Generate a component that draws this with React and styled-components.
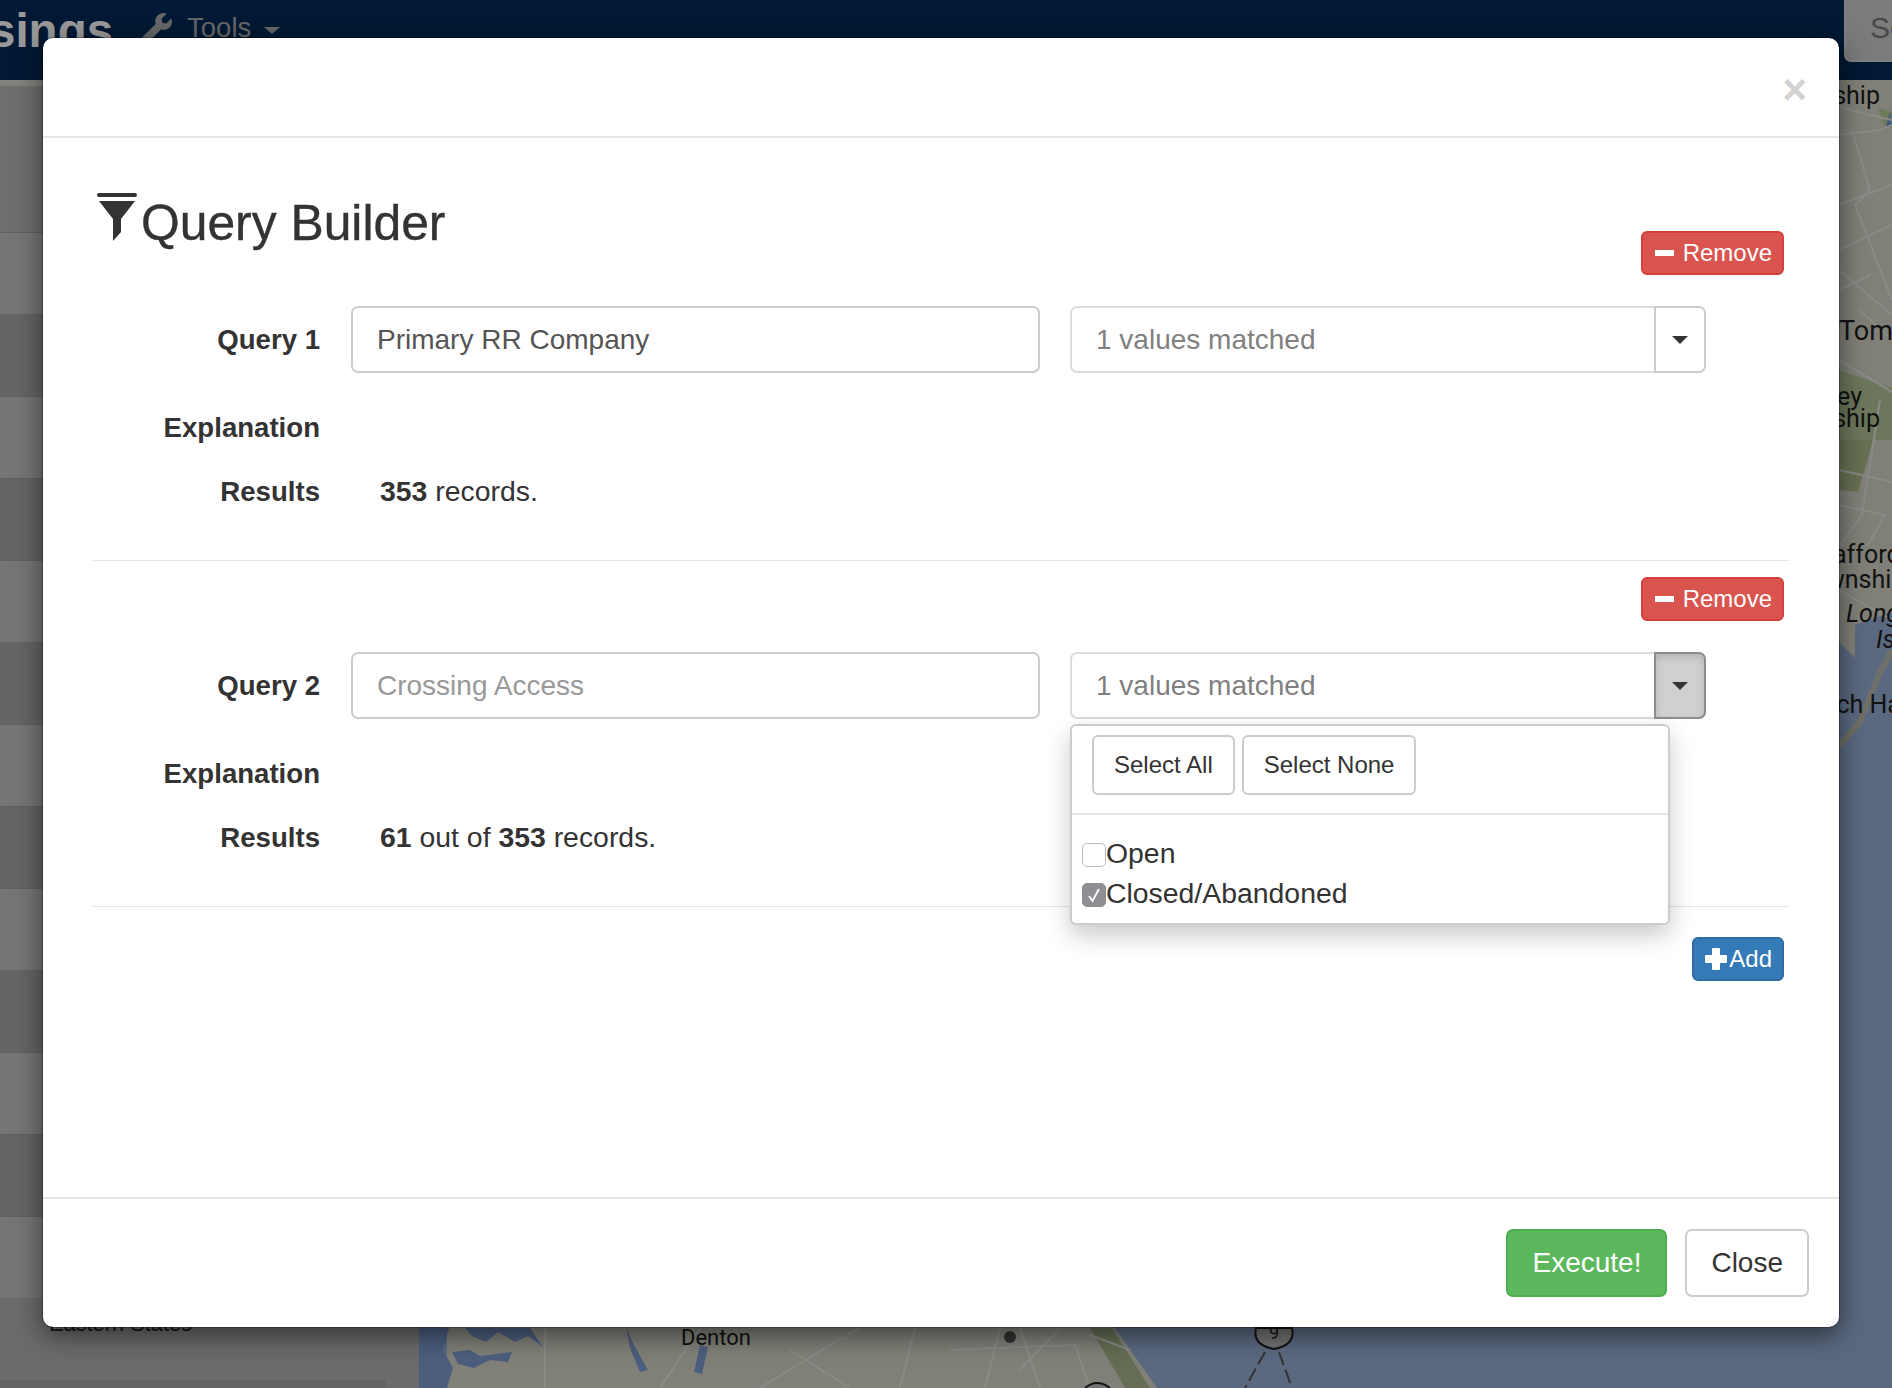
import React from "react";
import styled, { createGlobalStyle } from "styled-components";
import { FaWrench } from "react-icons/fa";

const GlobalStyle = createGlobalStyle`
  html, body {
    margin: 0;
    padding: 0;
    overflow: hidden;
  }
  body {
    font-family: "Liberation Sans", Arial, sans-serif;
    color: #333;
  }
  * {
    box-sizing: border-box;
  }
`;

const Page = styled.div`
  position: relative;
  width: 1892px;
  height: 1388px;
  overflow: hidden;
  display: flex;
  flex-direction: column;
`;

/* ---- page behind the dialog ---- */

const Navbar = styled.header`
  height: 80px;
  flex: none;
  display: flex;
  align-items: flex-start;
  background: #032b58;
  color: #fff;
  overflow: hidden;
`;

const Brand = styled.div`
  margin-left: -11px;
  margin-top: 3px;
  font-size: 47.5px;
  font-weight: 700;
  line-height: 56px;
`;

const NavTool = styled.div`
  display: flex;
  align-items: center;
  margin-left: 29px;
  margin-top: 12px;
  gap: 15px;
  color: #aaa;
  font-size: 27.5px;
  line-height: 32px;
`;

const NavCaret = styled.span`
  width: 0;
  height: 0;
  border-left: 8px solid transparent;
  border-right: 8px solid transparent;
  border-top: 7px solid #aaa;
  margin-top: 4px;
  margin-left: -2px;
`;

const SearchButton = styled.div`
  margin-left: auto;
  margin-top: -6px;
  width: 48px;
  height: 68px;
  padding: 10px 0 0 24px;
  background: #cdcdcd;
  border: 2px solid #d8d8d8;
  border-right: none;
  border-radius: 7px 0 0 7px;
  color: #777;
  font-size: 30px;
  line-height: 44px;
  overflow: hidden;
`;

const Workspace = styled.div`
  flex: 1;
  display: flex;
  min-height: 0;
`;

const Sidebar = styled.aside`
  width: 419px;
  flex: none;
  display: flex;
  flex-direction: column;
  background: #b2b2b2;
`;

const SidebarHead = styled.div`
  height: 152px;
  background: #b8b8b8;
  border-top: 6px solid #d8d8d0;
`;

const SidebarRow = styled.div`
  height: 82px;
  flex: none;
  background: ${(p) => (p.$light ? "#c4c4c4" : "#a9a9a9")};
  border-top: 1px solid #a0a0a0;
`;

const RegionLabel = styled.div`
  flex: 1;
  padding: 11px 0 0 49px;
  font-size: 21.8px;
  line-height: 30px;
  color: #222;
`;

const SidebarFoot = styled.div`
  width: 386px;
  height: 8px;
  background: #a8a8a8;
`;

const MapCanvas = styled.svg`
  flex: 1;
  display: block;
  background: #98afd5;
`;

const MapLabel = styled.text`
  font-family: Roboto, "Liberation Sans", sans-serif;
  font-size: ${(p) => p.$size || 25}px;
  font-style: ${(p) => (p.$italic ? "italic" : "normal")};
  fill: #1d1d1d;
`;

const Backdrop = styled.div`
  position: absolute;
  inset: 0;
  background: rgba(0, 0, 0, 0.4);
`;

/* ---- dialog ---- */

const Modal = styled.section`
  position: absolute;
  left: 42px;
  top: 37px;
  width: 1798px;
  height: 1291px;
  display: flex;
  flex-direction: column;
  background: #fff;
  background-clip: padding-box;
  border: 1px solid rgba(0, 0, 0, 0.25);
  border-radius: 11px;
  box-shadow: 0 8px 26px rgba(0, 0, 0, 0.5);
`;

const ModalHeader = styled.div`
  height: 100px;
  flex: none;
  display: flex;
  justify-content: flex-end;
  padding: 32px 32px 0 0;
  border-bottom: 2px solid #e5e5e5;
`;

const CloseX = styled.span`
  font-size: 42px;
  font-weight: 700;
  line-height: 40px;
  color: #d2d2d2;
`;

const ModalBody = styled.div`
  flex: 1;
  padding: 0 50px;
`;

const TitleRow = styled.div`
  height: 137px;
  display: flex;
  justify-content: space-between;
  align-items: flex-end;
  padding-right: 5px;
`;

const Title = styled.h2`
  margin: 56px 0 0;
  align-self: flex-start;
  display: flex;
  align-items: flex-start;
  font-size: 49.8px;
  font-weight: 400;
  line-height: 58px;
  color: #333;
  -webkit-text-stroke: 0.4px #333;
`;

const FunnelIcon = styled.svg`
  display: block;
  width: 40px;
  height: 48px;
  margin: -1px 4px 0;
  fill: #333;
`;

const RemoveRow = styled.div`
  display: flex;
  justify-content: flex-end;
  padding: 16px 5px 0 0;
`;

const SmallButton = styled.button`
  height: 44px;
  display: inline-flex;
  align-items: center;
  padding: 0 10px 0 ${(p) => p.$padLeft || 12}px;
  gap: ${(p) => p.$gap || 0}px;
  border-radius: 6px;
  border: 2px solid ${(p) => (p.$variant === "primary" ? "#2e6da4" : "#d43f3a")};
  background: ${(p) => (p.$variant === "primary" ? "#337ab7" : "#d9534f")};
  color: #fff;
  font-family: inherit;
  font-size: 24px;
`;

const MinusGlyph = styled.span`
  width: 19px;
  height: 6px;
  background: #fff;
`;

const FieldRow = styled.div`
  display: grid;
  grid-template-columns: 227px 689px 635px;
  column-gap: 31px;
  margin-top: ${(p) => p.$top}px;
  align-items: center;
  font-size: 28.4px;
  line-height: 40px;
`;

const FieldLabel = styled.label`
  text-align: right;
  font-size: 27.6px;
  font-weight: 700;
  color: #333;
`;

const TextInput = styled.input`
  width: 100%;
  height: 67px;
  padding: 0 24px;
  border: 2px solid #ccc;
  border-radius: 7px;
  background: #fff;
  color: #555;
  font-family: inherit;
  font-size: 28px;
  outline: none;
  &::placeholder {
    color: #999;
    opacity: 1;
  }
`;

const Combo = styled.div`
  position: relative;
  display: flex;
  height: 67px;
  margin-left: -1px;
`;

const ComboValue = styled.div`
  flex: 1;
  padding: 0 24px;
  display: flex;
  align-items: center;
  border: 2px solid #ddd;
  border-right: none;
  border-radius: 7px 0 0 7px;
  color: #808080;
  font-size: 28px;
`;

const ComboToggle = styled.button`
  width: 52px;
  display: flex;
  align-items: center;
  justify-content: center;
  padding: 0;
  border: 2px solid ${(p) => (p.$open ? "#8c8c8c" : "#ccc")};
  border-radius: 0 7px 7px 0;
  background: ${(p) => (p.$open ? "#d0d0d0" : "#fff")};
  box-shadow: ${(p) => (p.$open ? "inset 0 4px 7px rgba(0,0,0,.125)" : "none")};
`;

const Caret = styled.span`
  width: 0;
  height: 0;
  border-left: 8px solid transparent;
  border-right: 8px solid transparent;
  border-top: 8px solid #333;
`;

const ResultText = styled.div`
  padding-left: 29px;
  margin-top: -2px;
  grid-column: 2 / 4;
  b {
    font-weight: 700;
  }
`;

const Divider = styled.hr`
  margin: 48px 0 0;
  border: none;
  border-top: 1px solid #e5e5e5;
`;

const AddRow = styled.div`
  display: flex;
  justify-content: flex-end;
  padding: 30px 5px 0 0;
`;

const PlusGlyph = styled.span`
  position: relative;
  width: 22px;
  height: 22px;
  &::before,
  &::after {
    content: "";
    position: absolute;
    background: #fff;
    border-radius: 1px;
  }
  &::before {
    left: 0;
    right: 0;
    top: 7px;
    height: 8px;
  }
  &::after {
    top: 0;
    bottom: 0;
    left: 7px;
    width: 8px;
  }
`;

const Popover = styled.div`
  position: absolute;
  left: 0;
  top: 72px;
  width: 600px;
  height: 201px;
  background: #fff;
  border: 2px solid #ccc;
  border-radius: 6px;
  box-shadow: 0 10px 24px rgba(0, 0, 0, 0.22);
  z-index: 2;
`;

const PopoverActions = styled.div`
  height: 89px;
  display: flex;
  gap: 7px;
  padding: 9px 0 0 20px;
  border-bottom: 2px solid #e5e5e5;
`;

const OutlineButton = styled.button`
  height: 60px;
  padding: 0 20px;
  border: 2px solid #ccc;
  border-radius: 6px;
  background: #fff;
  color: #333;
  font-family: inherit;
  font-size: 24px;
`;

const OptionList = styled.div`
  padding: 18px 0 0 10px;
`;

const Option = styled.div`
  display: flex;
  align-items: center;
  height: 40px;
  font-size: 28.4px;
  color: #333;
`;

const CheckBox = styled.span`
  width: 24px;
  height: 24px;
  display: flex;
  align-items: center;
  justify-content: center;
  border-radius: 5px;
  border: 1px solid ${(p) => (p.$checked ? "#8e8e93" : "#bbb")};
  background: ${(p) => (p.$checked ? "#8e8e93" : "#fff")};
  margin-top: 3px;
`;

const ModalFooter = styled.div`
  height: 130px;
  flex: none;
  display: flex;
  justify-content: flex-end;
  gap: 18px;
  padding: 30px 30px 0 0;
  border-top: 2px solid #e5e5e5;
`;

const BigButton = styled.button`
  height: 68px;
  padding: 0 24px;
  border-radius: 7px;
  border: 2px solid ${(p) => (p.$success ? "#4cae4c" : "#ccc")};
  background: ${(p) => (p.$success ? "#5cb85c" : "#fff")};
  color: ${(p) => (p.$success ? "#fff" : "#333")};
  font-family: inherit;
  font-size: 28px;
`;

function Funnel() {
  return (
    <FunnelIcon viewBox="0 0 40 48">
      <rect x="0" y="0" width="40" height="4" rx="2" />
      <path d="M2 8H38L24 26V39L16 48V26Z" />
    </FunnelIcon>
  );
}

function MapPicture() {
  const roads = [
    "M1839 107L1870 115L1892 120",
    "M1839 135L1880 130L1892 125",
    "M1852 130L1870 190L1855 205L1892 300",
    "M1839 205L1892 185",
    "M1839 250L1892 225",
    "M1839 270L1892 315",
    "M1839 290L1870 275",
    "M1860 310L1892 340",
    "M1839 360L1892 392",
    "M1839 470L1892 482",
    "M1839 505L1885 515L1868 545",
    "M1840 545L1862 515L1880 400",
    "M1839 590L1892 620",
    "M545 1328V1388",
    "M660 1388L700 1328",
    "M760 1388L830 1345L860 1328",
    "M790 1350L850 1388",
    "M900 1388L915 1328",
    "M1000 1328L985 1388",
    "M1020 1328L1040 1388",
    "M950 1350L1075 1345L1090 1388",
    "M1060 1328L1020 1370",
    "M1090 1335L1130 1350",
  ];
  return (
    <MapCanvas viewBox="419 80 1473 1308">
      <path d="M447 80H1892V612L1855 625V658L1839 642L1500 900L1115 1328L1157 1388H447Z" fill="#d6d6ca" />
      <path d="M1892 650L1880 672L1860 722L1839 746" fill="none" stroke="#b9b9b0" strokeWidth="6" />
      <path d="M1840 430H1876L1858 492L1840 490Z" fill="#adbd8a" />
      <path d="M1878 108L1892 112V128L1884 125Z" fill="#b6cb94" />
      <path d="M1839 370L1892 388V440H1839Z" fill="#b6c79a" />
      <path d="M1090 1328H1112L1150 1388H1125Z" fill="#a9b88d" />
      <path d="M419 1328H449L443 1350L453 1368L447 1388H419Z" fill="#7f9dd2" />
      <path d="M465 1328H530L543 1347L528 1336L515 1342L498 1332L486 1342L472 1336Z" fill="#7f9dd2" />
      <path d="M452 1352L470 1350L480 1356L512 1352L508 1362L490 1360L474 1368L458 1364Z" fill="#7f9dd2" />
      <path d="M626 1328L634 1345L648 1370L640 1372L630 1348Z" fill="#7f9dd2" />
      <path d="M700 1345L708 1347L702 1374L694 1372Z" fill="#7f9dd2" />
      <path d="M1890 112L1892 126H1886Z" fill="#6d94d8" />
      {roads.map((d) => (
        <path key={d} d={d} fill="none" stroke="#e6e6e0" strokeWidth="2" />
      ))}
      <path d="M1265 1352L1245 1388M1279 1352L1292 1388" fill="none" stroke="#555" strokeWidth="2" strokeDasharray="14 5" />
      <circle cx="1010" cy="1337" r="6" fill="#555" />
      <path d="M1256 1328H1292Q1296 1345 1274 1349Q1252 1345 1256 1328Z" fill="#c0c0c0" stroke="#222" strokeWidth="2" />
      <MapLabel x="1274" y="1339" textAnchor="middle" $size={18}>9</MapLabel>
      <path d="M1085 1388Q1097 1378 1110 1388" fill="#c0c0c0" stroke="#222" strokeWidth="2" />
      <MapLabel x="1880" y="104" textAnchor="end">Township</MapLabel>
      <MapLabel x="1839" y="340" $size={27}>Toms</MapLabel>
      <MapLabel x="1862" y="405" textAnchor="end">Jersey</MapLabel>
      <MapLabel x="1880" y="427" textAnchor="end">Township</MapLabel>
      <MapLabel x="1810" y="563">Stafford</MapLabel>
      <MapLabel x="1798" y="588">Township</MapLabel>
      <MapLabel x="1846" y="622" $italic>Long</MapLabel>
      <MapLabel x="1876" y="648" $italic>Is</MapLabel>
      <MapLabel x="1794" y="713">Beach Haven</MapLabel>
      <MapLabel x="681" y="1345" $size={22}>Denton</MapLabel>
    </MapCanvas>
  );
}

function QuerySection({ name, inputProps, results, open }) {
  return (
    <>
      <FieldRow $top={31}>
        <FieldLabel>{name}</FieldLabel>
        <TextInput readOnly {...inputProps} />
        <Combo>
          <ComboValue>1 values matched</ComboValue>
          <ComboToggle $open={open}>
            <Caret />
          </ComboToggle>
          {open && (
            <Popover>
              <PopoverActions>
                <OutlineButton>Select All</OutlineButton>
                <OutlineButton>Select None</OutlineButton>
              </PopoverActions>
              <OptionList>
                <Option>
                  <CheckBox />
                  Open
                </Option>
                <Option>
                  <CheckBox $checked>
                    <svg width="14" height="16" viewBox="0 0 14 16">
                      <path d="M2 9L5.5 14L12 2" fill="none" stroke="#fff" strokeWidth="1.8" />
                    </svg>
                  </CheckBox>
                  Closed/Abandoned
                </Option>
              </OptionList>
            </Popover>
          )}
        </Combo>
      </FieldRow>
      <FieldRow $top={35}>
        <FieldLabel>Explanation</FieldLabel>
      </FieldRow>
      <FieldRow $top={24}>
        <FieldLabel>Results</FieldLabel>
        <ResultText>{results}</ResultText>
      </FieldRow>
      <Divider />
    </>
  );
}

export default function App() {
  const rows = [];
  for (let i = 0; i < 13; i++) {
    rows.push(<SidebarRow key={i} $light={i % 2 === 0} />);
  }

  return (
    <Page>
      <GlobalStyle />
      <Navbar>
        <Brand>sings</Brand>
        <NavTool>
          <FaWrench size={30} />
          Tools
          <NavCaret />
        </NavTool>
        <SearchButton>Se</SearchButton>
      </Navbar>
      <Workspace>
        <Sidebar>
          <SidebarHead />
          {rows}
          <RegionLabel>Eastern States</RegionLabel>
          <SidebarFoot />
        </Sidebar>
        <MapPicture />
      </Workspace>
      <Backdrop />

      <Modal>
        <ModalHeader>
          <CloseX>×</CloseX>
        </ModalHeader>
        <ModalBody>
          <TitleRow>
            <Title>
              <Funnel />
              Query Builder
            </Title>
            <SmallButton $gap={9}>
              <MinusGlyph />
              Remove
            </SmallButton>
          </TitleRow>
          <QuerySection
            name="Query 1"
            inputProps={{ value: "Primary RR Company" }}
            results={
              <>
                <b>353</b> records.
              </>
            }
          />
          <RemoveRow>
            <SmallButton $gap={9}>
              <MinusGlyph />
              Remove
            </SmallButton>
          </RemoveRow>
          <QuerySection
            name="Query 2"
            inputProps={{ placeholder: "Crossing Access" }}
            open
            results={
              <>
                <b>61</b> out of <b>353</b> records.
              </>
            }
          />
          <AddRow>
            <SmallButton $variant="primary" $padLeft={11} $gap={2}>
              <PlusGlyph />
              Add
            </SmallButton>
          </AddRow>
        </ModalBody>
        <ModalFooter>
          <BigButton $success>Execute!</BigButton>
          <BigButton>Close</BigButton>
        </ModalFooter>
      </Modal>
    </Page>
  );
}
